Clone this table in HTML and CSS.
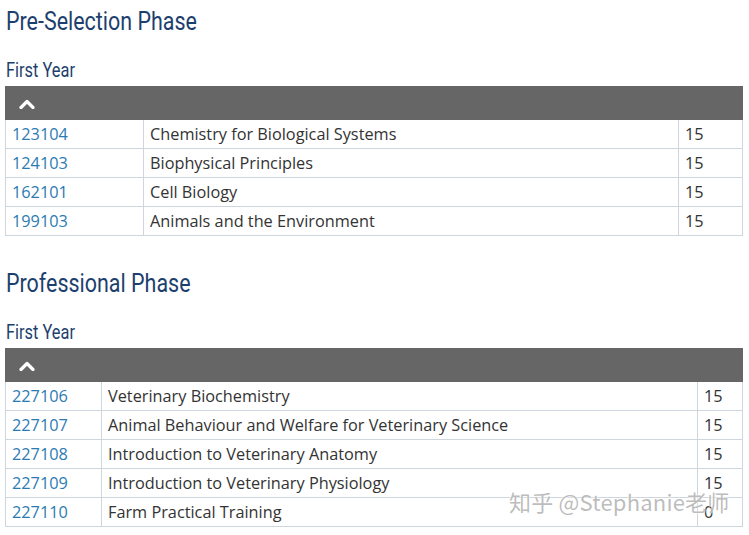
FILE: index.html
```html
<!DOCTYPE html>
<html>
<head>
<meta charset="utf-8">
<link rel="stylesheet" href="styles.css">
</head>
<body>
<div class="page">
  <h2 class="phase"><span class="cond">Pre-Selection Phase</span></h2>
  <h3 class="year"><span class="cond">First Year</span></h3>
  <table class="courses c1">
    <thead><tr><th colspan="3"><svg class="chev" width="16" height="10" viewBox="0 0 16 10"><path d="M2 8.5 L8 2.5 L14 8.5" fill="none" stroke="#fff" stroke-width="3.2" stroke-linecap="round" stroke-linejoin="round"/></svg></th></tr></thead>
    <tbody>
      <tr><td class="code"><a>123104</a></td><td class="name">Chemistry for Biological Systems</td><td class="cr">15</td></tr>
      <tr><td class="code"><a>124103</a></td><td class="name">Biophysical Principles</td><td class="cr">15</td></tr>
      <tr><td class="code"><a>162101</a></td><td class="name">Cell Biology</td><td class="cr">15</td></tr>
      <tr><td class="code"><a>199103</a></td><td class="name">Animals and the Environment</td><td class="cr">15</td></tr>
    </tbody>
  </table>

  <h2 class="phase second"><span class="cond">Professional Phase</span></h2>
  <h3 class="year"><span class="cond">First Year</span></h3>
  <table class="courses c2">
    <thead><tr><th colspan="3"><svg class="chev" width="16" height="10" viewBox="0 0 16 10"><path d="M2 8.5 L8 2.5 L14 8.5" fill="none" stroke="#fff" stroke-width="3.2" stroke-linecap="round" stroke-linejoin="round"/></svg></th></tr></thead>
    <tbody>
      <tr><td class="code"><a>227106</a></td><td class="name">Veterinary Biochemistry</td><td class="cr">15</td></tr>
      <tr><td class="code"><a>227107</a></td><td class="name">Animal Behaviour and Welfare for Veterinary Science</td><td class="cr">15</td></tr>
      <tr><td class="code"><a>227108</a></td><td class="name">Introduction to Veterinary Anatomy</td><td class="cr">15</td></tr>
      <tr><td class="code"><a>227109</a></td><td class="name">Introduction to Veterinary Physiology</td><td class="cr">15</td></tr>
      <tr><td class="code"><a>227110</a></td><td class="name">Farm Practical Training</td><td class="cr">0</td></tr>
    </tbody>
  </table>
  <div class="watermark">知乎 @Stephanie老师</div>
</div>
</body>
</html>
```
FILE: styles.css
```css
html, body {
  margin: 0;
  padding: 0;
  background: #fff;
}
.page {
  position: relative;
  padding: 0 6px 0 5px;
  font-family: "Open Sans", "Noto Sans", sans-serif;
}
.cond {
  display: inline-block;
  transform-origin: 0 50%;
  white-space: nowrap;
}
.phase {
  margin: 0;
  padding: 6px 0 0 1px;
  height: 48px;
  box-sizing: border-box;
  font-family: "Roboto", sans-serif;
  font-weight: normal;
  font-size: 26px;
  line-height: 30px;
  color: #1d3f6e;
}
.phase .cond {
  transform: scaleX(0.825);
}
.phase.second {
  margin-top: 26px;
}
.year {
  margin: 0;
  padding: 10px 0 0 1px;
  height: 38px;
  box-sizing: border-box;
  font-family: "Roboto", sans-serif;
  font-weight: normal;
  font-size: 21px;
  line-height: 24px;
  color: #1d3f6e;
}
.year .cond {
  transform: scaleX(0.78);
}
.courses {
  width: 100%;
  border-collapse: collapse;
  font-size: 16.3px;
  color: #333;
}
.courses th {
  background: #666;
  height: 33px;
  padding: 0 0 0 13px;
  text-align: left;
  vertical-align: middle;
  border: 1px solid #666;
  box-sizing: border-box;
}
.chev {
  display: block;
  margin-top: 2px;
}
.courses td {
  border: 1px solid #cdd6de;
  height: 28px;
  padding: 0 6px;
  line-height: 20px;
  vertical-align: middle;
  white-space: nowrap;
}
.courses a {
  color: #2b7bb3;
  text-decoration: none;
}
.c1 .code { width: 125px; }
.c1 .cr { width: 51px; }
.c2 .code { width: 83px; }
.c2 .cr { width: 32px; }
.watermark {
  position: absolute;
  left: 509px;
  top: 485px;
  font-family: "Noto Sans CJK SC", "Noto Sans", sans-serif;
  font-size: 22px;
  color: rgba(160, 160, 160, 0.7);
  text-shadow: 0 0 2px #fff, 0 0 2px #fff;
  letter-spacing: 0.2px;
}
```
